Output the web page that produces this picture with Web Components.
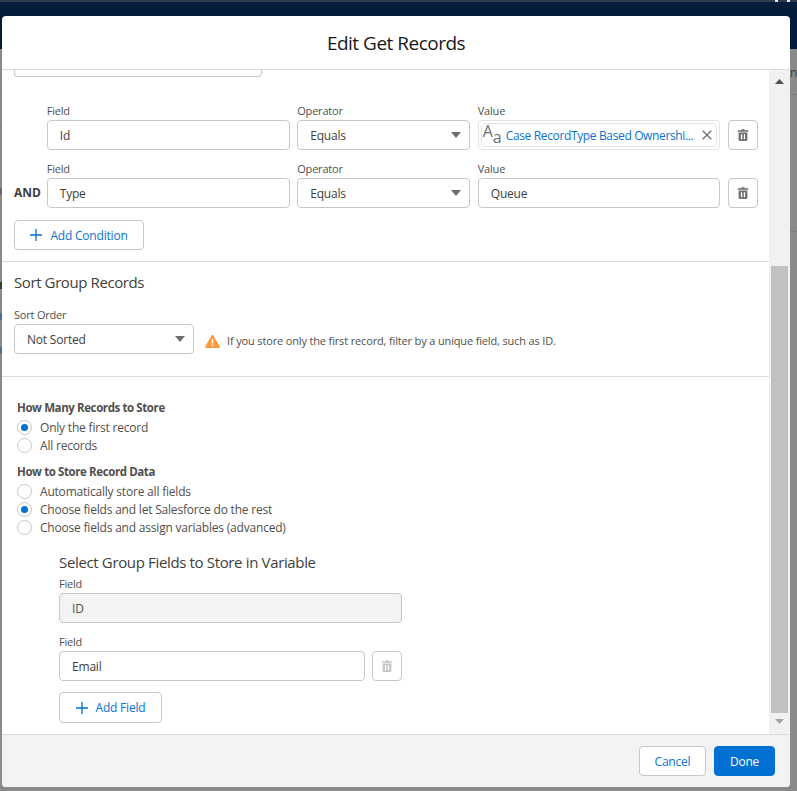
<!DOCTYPE html>
<html>
<head>
<meta charset="utf-8">
<title>Edit Get Records</title>
<style>
  html, body { margin: 0; height: 100%; overflow: hidden; }
  body { font-family: "Open Sans", "Noto Sans", sans-serif; font-size: 12px; letter-spacing: -0.2px; color: #3e3e3c; }
</style>
</head>
<body>
<flow-backdrop>
  <flow-modal heading="Edit Get Records">
    <div style="display:block">
      <form-section>
        <partial-box></partial-box>
        <condition-row>
          <text-field label="Field" value="Id"></text-field>
          <select-field label="Operator" value="Equals"></select-field>
          <resource-pill label="Value" value="Case RecordType Based Ownershi..."></resource-pill>
          <trash-button></trash-button>
        </condition-row>
        <condition-row logic="AND" style="margin-bottom:12px">
          <text-field label="Field" value="Type"></text-field>
          <select-field label="Operator" value="Equals"></select-field>
          <text-field label="Value" value="Queue"></text-field>
          <trash-button></trash-button>
        </condition-row>
        <add-button label="Add Condition" width="130"></add-button>
      </form-section>
      <sort-section></sort-section>
      <store-section></store-section>
    </div>
    <div slot="footer" style="display:flex;gap:8px">
      <foot-button label="Cancel" width="67"></foot-button>
      <foot-button label="Done" width="61" brand></foot-button>
    </div>
  </flow-modal>
</flow-backdrop>

<script>
const TRASH = `<svg viewBox="0 0 14 14" width="14" height="14"><path fill="currentColor" d="M5.4 1.2h3.2v1.1h3.6v1.4H1.8V2.3h3.6zM2.6 4.6h8.8v7.2c0 .7-.5 1.2-1.2 1.2H3.800c-.7 0-1.200-.5-1.200-1.200zM4.900 6.300v4.900h1.300V6.300zm2.900 0v4.900h1.300V6.300z"/></svg>`;
const CARET = `<svg viewBox="0 0 10 6" width="10" height="6"><path fill="#706e6b" d="M0 0h10L5 6z"/></svg>`;

// shared look of the boxed inputs
const BOX = `
  .label { display: block; font-size: 11px; line-height: 12px; color: #514f4d; margin-bottom: 3px; }
  .box { box-sizing: border-box; height: 30px; border: 1px solid #c9c7c5; border-radius: 4px; background: #fff;
         display: flex; align-items: center; padding: 0 12px; color: #3e3e3c; font-size: 12px; white-space: nowrap; }
`;

class FlowBackdrop extends HTMLElement {
  connectedCallback() {
    this.attachShadow({ mode: 'open' }).innerHTML = `
      <style>
        :host { display: block; position: relative; height: 791px; background: #8a8a8a; overflow: hidden; }
        .top { height: 2px; background: #2f3c4f; }
        .nav { height: 47px; background: #051c3a; }
        .peek { position: absolute; left: 790px; top: 66px; font-size: 12px; line-height: 14px; color: #3a3a3a; }
        .line { position: absolute; height: 1px; background: #7c7c7c; }
        .right { left: 790px; right: 0; }
        .left { left: 0; width: 2px; }
        .bit { position: absolute; left: 0; width: 2px; height: 7px; }
        .dot { position: absolute; top: 0; width: 3px; height: 2px; background: #e6e8ea; }
      </style>
      <div class="top"></div>
      <div class="nav"></div>
      <i class="dot" style="left:775px"></i>
      <i class="dot" style="left:787px"></i>
      <span class="peek">nc</span>
      <div class="line right" style="top:94px"></div>
      <div class="line right" style="top:231px"></div>
      <div class="line left" style="top:94px"></div>
      <div class="line left" style="top:127px"></div>
      <div class="line left" style="top:204px"></div>
      <div class="line left" style="top:298px"></div>
      <div class="line left" style="top:332px"></div>
      <div class="line left" style="top:363px"></div>
      <i class="bit" style="top:188px;background:#5f6a78"></i>
      <i class="bit" style="top:282px;background:#3a3a3a"></i>
      <i class="bit" style="top:313px;background:#50708f"></i>
      <i class="bit" style="top:347px;background:#50708f"></i>
      <slot></slot>`;
  }
}

class FlowModal extends HTMLElement {
  connectedCallback() {
    this.attachShadow({ mode: 'open' }).innerHTML = `
      <style>
        :host { position: absolute; left: 2px; top: 16px; width: 788px; height: 771px; display: flex; flex-direction: column;
                background: #fff; border-radius: 4px; overflow: hidden; }
        header { height: 53px; flex: none; display: flex; align-items: center; justify-content: center; border-bottom: 1px solid #dddbda;
                 font-size: 19px; letter-spacing: -0.5px; color: #181818; }
        .middle { flex: 1; min-height: 0; display: flex; }
        .content { flex: 1; min-width: 0; overflow: hidden; }
        .bar { flex: none; width: 21px; background: #f1f1f1; display: flex; flex-direction: column; align-items: center; }
        .arrow { height: 17px; margin-top: 3px; display: flex; align-items: center; justify-content: center; }
        .thumb { width: 17px; background: #c1c1c1; }
        footer { height: 53px; flex: none; box-sizing: border-box; border-top: 1px solid #dddbda; background: #f3f3f3;
                 display: flex; align-items: center; justify-content: flex-end; padding: 0 15px 0 0; }
      </style>
      <header>${this.getAttribute('heading')}</header>
      <div class="middle">
        <div class="content"><slot></slot></div>
        <div class="bar">
          <div class="arrow"><svg viewBox="0 0 9 5" width="9" height="5"><path fill="#505050" d="M0 5h9L4.500 0z"/></svg></div>
          <div class="thumb" style="margin-top:176px;height:447px"></div>
          <div class="arrow" style="margin-top:0"><svg viewBox="0 0 9 5" width="9" height="5"><path fill="#a3a3a3" d="M0 0h9L4.500 5z"/></svg></div>
        </div>
      </div>
      <footer><slot name="footer"></slot></footer>`;
  }
}

class FormSection extends HTMLElement {
  connectedCallback() {
    this.attachShadow({ mode: 'open' }).innerHTML = `
      <style>
        :host { display: block; height: 191px; border-bottom: 1px solid #dddbda; padding-left: 12px; }
      </style>
      <slot></slot>`;
  }
}

class PartialBox extends HTMLElement {
  connectedCallback() {
    this.attachShadow({ mode: 'open' }).innerHTML = `
      <style>
        :host { display: block; box-sizing: border-box; width: 248px; height: 7px; margin-bottom: 28px;
                border: 1px solid #c9c7c5; border-top: 0; border-radius: 0 0 4px 4px; }
      </style>`;
  }
}

class ConditionRow extends HTMLElement {
  connectedCallback() {
    const logic = this.getAttribute('logic') || '';
    this.attachShadow({ mode: 'open' }).innerHTML = `
      <style>
        :host { display: grid; grid-template-columns: 25.25px 243px 173px 242.5px 30px; column-gap: 7.5px; align-items: end; margin-bottom: 13px; }
        .logic { font-weight: 700; font-size: 12px; letter-spacing: 0; color: #3e3e3c; height: 30px; line-height: 30px; white-space: nowrap; }
      </style>
      <div class="logic">${logic}</div>
      <slot></slot>`;
  }
}

class TextField extends HTMLElement {
  connectedCallback() {
    const off = this.hasAttribute('disabled');
    this.attachShadow({ mode: 'open' }).innerHTML = `
      <style>
        :host { display: block; }
        ${BOX}
        .off { background: #f3f3f3; color: #514f4d; }
      </style>
      <span class="label">${this.getAttribute('label')}</span>
      <div class="box ${off ? 'off' : ''}">${this.getAttribute('value')}</div>`;
  }
}

class SelectField extends HTMLElement {
  connectedCallback() {
    this.attachShadow({ mode: 'open' }).innerHTML = `
      <style>
        :host { display: block; }
        ${BOX}
        .box { justify-content: space-between; padding-right: 8px; }
      </style>
      <span class="label">${this.getAttribute('label')}</span>
      <div class="box">${this.getAttribute('value')}${CARET}</div>`;
  }
}

class ResourcePill extends HTMLElement {
  connectedCallback() {
    this.attachShadow({ mode: 'open' }).innerHTML = `
      <style>
        :host { display: block; }
        ${BOX}
        .box { padding: 2px; border-color: #e4e3e2; }
        .pill { flex: 1; height: 100%; box-sizing: border-box; border: 1px solid #e4e3e2; border-radius: 4px; display: flex; align-items: center; min-width: 0; padding: 0 4px 0 1px; }
        .aa { flex: none; width: 23px; color: #706e6b; position: relative; height: 24px; letter-spacing: 0; }
        .aa b { font-weight: 400; position: absolute; line-height: 1; }
        .aa .big { left: 0; top: 0; font-size: 16px; }
        .aa .small { left: 10px; top: 6px; font-size: 16px; }
        .text { flex: 1; min-width: 0; color: #0b72cf; letter-spacing: -0.36px; }
        svg { flex: none; }
      </style>
      <span class="label">${this.getAttribute('label')}</span>
      <div class="box"><div class="pill">
        <span class="aa"><b class="big">A</b><b class="small">a</b></span>
        <span class="text">${this.getAttribute('value')}</span>
        <svg viewBox="0 0 10 10" width="10" height="10"><path d="M.7.7l8.600 8.600M9.300.7L.7 9.300" stroke="#706e6b" stroke-width="1.300" fill="none"/></svg>
      </div></div>`;
  }
}

class TrashButton extends HTMLElement {
  connectedCallback() {
    const off = this.hasAttribute('disabled');
    this.attachShadow({ mode: 'open' }).innerHTML = `
      <style>
        :host { display: flex; box-sizing: border-box; width: 30px; height: 30px; border: 1px solid #c9c7c5; border-radius: 4px;
                align-items: center; justify-content: center; color: ${off ? '#c9c7c5' : '#706e6b'}; background: #fff; }
      </style>${TRASH}`;
  }
}

class AddButton extends HTMLElement {
  connectedCallback() {
    this.attachShadow({ mode: 'open' }).innerHTML = `
      <style>
        :host { display: flex; box-sizing: border-box; width: ${this.getAttribute('width')}px; height: 30px; border: 1px solid #c9c7c5; border-radius: 4px;
                align-items: center; justify-content: center; gap: 8px; color: #0b72cf; font-size: 12px; background: #fff; }
      </style>
      <svg viewBox="0 0 12 12" width="12" height="12"><path d="M6 0v12M0 6h12" stroke="#0070d2" stroke-width="1.300" fill="none"/></svg>
      <span>${this.getAttribute('label')}</span>`;
  }
}

class SortSection extends HTMLElement {
  connectedCallback() {
    this.attachShadow({ mode: 'open' }).innerHTML = `
      <style>
        :host { display: block; height: 115px; box-sizing: border-box; border-bottom: 1px solid #dddbda; padding: 10px 0 0 12px; }
        h3 { margin: 0 0 17px; font-weight: 400; font-size: 15px; letter-spacing: -0.4px; line-height: 20px; color: #3e3e3c; }
        .row { display: flex; align-items: flex-end; gap: 11px; }
        .warn { display: flex; align-items: center; gap: 7px; height: 30px; font-size: 11px; letter-spacing: -0.15px; color: #514f4d; padding-top: 3px; box-sizing: border-box; }
        .warn svg { margin-top: 2px; flex: none; }
        select-field { width: 180px; }
      </style>
      <h3>Sort Group Records</h3>
      <div class="row">
        <select-field label="Sort Order" value="Not Sorted"></select-field>
        <div class="warn">
          <svg viewBox="0 0 16 14" width="15" height="13"><path fill="#ff9a3c" d="M8 0c.4 0 .700.2.900.5l7 12c.4.700 0 1.500-.9 1.500H1c-.9 0-1.300-.8-.9-1.500l7-12C7.300.2 7.600 0 8 0z"/><path fill="#fff" d="M7.200 4.200h1.600v5H7.200zM7.200 10.200h1.600v1.600H7.200z"/></svg>
          <span>If you store only the first record, filter by a unique field, such as ID.</span>
        </div>
      </div>`;
  }
}

class RadioOption extends HTMLElement {
  connectedCallback() {
    const on = this.hasAttribute('checked');
    this.attachShadow({ mode: 'open' }).innerHTML = `
      <style>
        :host { display: flex; align-items: center; gap: 8px; height: 18px; font-size: 12px; color: #514f4d; }
        i { flex: none; box-sizing: border-box; width: 15px; height: 15px; border: 1px solid #c9c7c5; border-radius: 50%; background: #fff;
            display: flex; align-items: center; justify-content: center; }
        i::after { content: ''; width: 7px; height: 7px; border-radius: 50%; background: ${on ? '#0070d2' : 'transparent'}; }
      </style>
      <i></i><span><slot></slot></span>`;
  }
}

class StoreSection extends HTMLElement {
  connectedCallback() {
    this.attachShadow({ mode: 'open' }).innerHTML = `
      <style>
        :host { display: block; padding: 22px 0 0 15px; }
        h4 { margin: 0 0 1px; font-size: 11.500px; letter-spacing: -0.4px; line-height: 18px; font-weight: 700; color: #514f4d; }
        .gap { margin-top: 9px; }
        .fields { margin: 16px 0 0 42px; width: 343px; }
        h3 { margin: 0 0 6px; font-weight: 400; font-size: 15px; letter-spacing: -0.35px; line-height: 20px; color: #3e3e3c; }
        .row { display: flex; gap: 7px; align-items: flex-end; margin-top: 13px; }
        .row text-field { flex: 1; }
      </style>
      <h4>How Many Records to Store</h4>
      <radio-option checked>Only the first record</radio-option>
      <radio-option>All records</radio-option>
      <h4 class="gap">How to Store Record Data</h4>
      <radio-option>Automatically store all fields</radio-option>
      <radio-option checked>Choose fields and let Salesforce do the rest</radio-option>
      <radio-option>Choose fields and assign variables (advanced)</radio-option>
      <div class="fields">
        <h3>Select Group Fields to Store in Variable</h3>
        <text-field label="Field" value="ID" disabled></text-field>
        <div class="row">
          <text-field label="Field" value="Email"></text-field>
          <trash-button disabled></trash-button>
        </div>
        <add-button label="Add Field" width="103" style="margin-top:11px;height:31px"></add-button>
      </div>`;
  }
}

class FootButton extends HTMLElement {
  connectedCallback() {
    const brand = this.hasAttribute('brand');
    this.attachShadow({ mode: 'open' }).innerHTML = `
      <style>
        :host { display: flex; box-sizing: border-box; width: ${this.getAttribute('width')}px; height: 30px; border-radius: 4px; align-items: center; justify-content: center; font-size: 12px;
                border: 1px solid ${brand ? '#0070d2' : '#c9c7c5'}; background: ${brand ? '#0070d2' : '#fff'}; color: ${brand ? '#fff' : '#0b72cf'}; }
      </style>${this.getAttribute('label')}`;
  }
}

customElements.define('flow-backdrop', FlowBackdrop);
customElements.define('flow-modal', FlowModal);
customElements.define('form-section', FormSection);
customElements.define('partial-box', PartialBox);
customElements.define('condition-row', ConditionRow);
customElements.define('text-field', TextField);
customElements.define('select-field', SelectField);
customElements.define('resource-pill', ResourcePill);
customElements.define('trash-button', TrashButton);
customElements.define('add-button', AddButton);
customElements.define('sort-section', SortSection);
customElements.define('radio-option', RadioOption);
customElements.define('store-section', StoreSection);
customElements.define('foot-button', FootButton);
</script>
</body>
</html>
